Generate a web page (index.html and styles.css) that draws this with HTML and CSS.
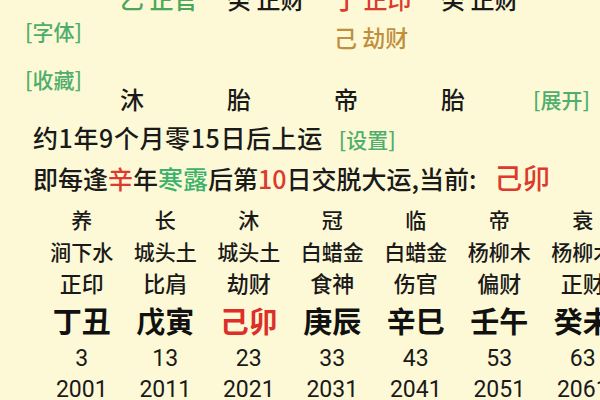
FILE: index.html
```html
<!DOCTYPE html>
<html lang="zh-CN">
<head>
<meta charset="utf-8">
<title>大运</title>
<link rel="stylesheet" href="styles.css">
</head>
<body>
<div class="page">
  <div class="top">
    <div class="side">
      <span class="link">[字体]</span>
      <span class="link">[收藏]</span>
    </div>
    <div class="pillars">
      <div class="prow gan">
        <span class="green">乙 正官</span><span>癸 正财</span><span class="red">丁 正印</span><span>癸 正财</span>
      </div>
      <div class="prow hide">
        <span></span><span></span><span class="brown">己 劫财</span><span></span>
      </div>
      <div class="prow star">
        <span>沐</span><span>胎</span><span>帝</span><span class="last"><span>胎</span><span class="link">[展开]</span></span>
      </div>
    </div>
  </div>

  <div class="info first">约1年9个月零15日后上运<span class="link set">[设置]</span></div>
  <div class="info">即每逢<span class="red">辛</span>年<span class="green2">寒露</span>后第<span class="red">10</span>日交脱大运,当前: <span class="cur">己卯</span></div>

  <div class="dayun">
    <div class="col"><span class="xy">养</span><span class="ny">涧下水</span><span class="ss">正印</span><span class="gz">丁丑</span><span class="age">3</span><span class="yr">2001</span></div>
    <div class="col"><span class="xy">长</span><span class="ny">城头土</span><span class="ss">比肩</span><span class="gz">戊寅</span><span class="age">13</span><span class="yr">2011</span></div>
    <div class="col"><span class="xy">沐</span><span class="ny">城头土</span><span class="ss">劫财</span><span class="gz now">己卯</span><span class="age">23</span><span class="yr">2021</span></div>
    <div class="col"><span class="xy">冠</span><span class="ny">白蜡金</span><span class="ss">食神</span><span class="gz">庚辰</span><span class="age">33</span><span class="yr">2031</span></div>
    <div class="col"><span class="xy">临</span><span class="ny">白蜡金</span><span class="ss">伤官</span><span class="gz">辛巳</span><span class="age">43</span><span class="yr">2041</span></div>
    <div class="col"><span class="xy">帝</span><span class="ny">杨柳木</span><span class="ss">偏财</span><span class="gz">壬午</span><span class="age">53</span><span class="yr">2051</span></div>
    <div class="col"><span class="xy">衰</span><span class="ny">杨柳木</span><span class="ss">正财</span><span class="gz">癸未</span><span class="age">63</span><span class="yr">2061</span></div>
  </div>
</div>
</body>
</html>
```
FILE: styles.css
```css
html, body {
  margin: 0;
  padding: 0;
  width: 600px;
  height: 400px;
  overflow: hidden;
  background: #fdf9d6;
}

.page {
  width: 600px;
  height: 400px;
  overflow: hidden;
  font-family: "Noto Sans CJK SC", "Noto Sans", sans-serif;
  font-weight: 500;
  color: #1a1a1a;
}

.link {
  color: #4fae6c;
  font-size: 21px;
}

.green { color: #4aa85c; }
.green2 { color: #3db26c; }
.red { color: #dc3a2e; }
.brown { color: #bf8f3f; }

.top {
  display: flex;
  height: 118px;
}

.side {
  width: 120px;
  box-sizing: border-box;
  padding-left: 25px;
  padding-top: 19px;
  display: flex;
  flex-direction: column;
  gap: 24px;
  line-height: 24px;
}

.pillars {
  flex: 1;
  padding-right: 10px;
  display: flex;
  flex-direction: column;
}

.prow {
  display: grid;
  grid-template-columns: 107px 107px 107px 1fr;
  height: 38px;
  line-height: 38px;
  font-size: 24px;
  white-space: nowrap;
}

.gan { margin-top: -20px; }
.hide { font-size: 23px; }
.star { margin-top: 24px; }

.last {
  display: flex;
  justify-content: space-between;
}

.info {
  padding-left: 33px;
  font-size: 25px;
  line-height: 38px;
  white-space: nowrap;
}

.info.first {
  letter-spacing: 0.6px;
}

.set {
  margin-left: 16px;
  letter-spacing: 0;
}

.cur {
  color: #dc3a2e;
  font-size: 28px;
  margin-left: 12px;
}

.dayun {
  display: flex;
  margin-left: 40px;
  margin-top: 6px;
  width: max-content;
}

.col {
  width: 83.5px;
  display: flex;
  flex-direction: column;
  align-items: center;
  white-space: nowrap;
}

.xy { font-size: 21px; line-height: 32px; }
.ny { font-size: 21px; line-height: 32px; }
.ss { font-size: 22px; line-height: 30px; }
.gz { font-size: 29px; line-height: 46px; font-weight: 700; color: #111; }
.gz.now { color: #dc2f2a; }
.age { font-family: Roboto, "Noto Sans", sans-serif; font-weight: 400; font-size: 23px; line-height: 32px; }
.yr { font-family: Roboto, "Noto Sans", sans-serif; font-weight: 400; font-size: 23px; line-height: 30px; }
```
